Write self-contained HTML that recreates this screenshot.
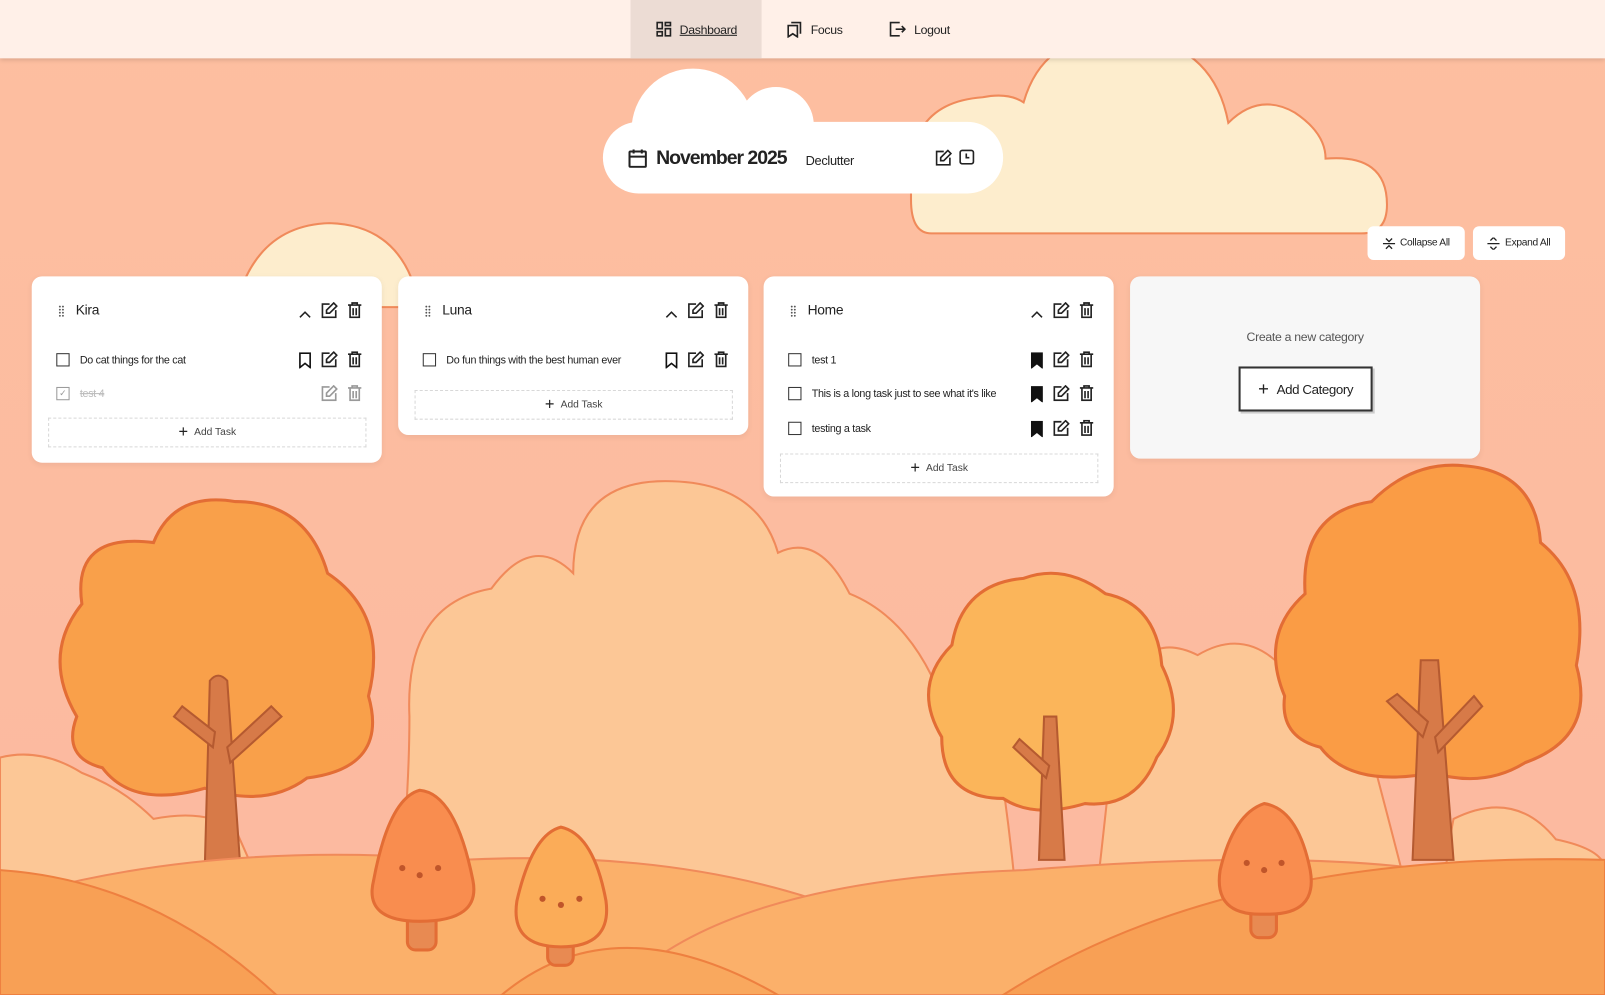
<!DOCTYPE html>
<html><head><meta charset="utf-8"><style>
html,body{margin:0;padding:0;width:1605px;height:995px;overflow:hidden;background:#fdbfa0;}
#root{position:absolute;left:0;top:0;width:1568px;height:972px;transform:scale(1.02360,1.02366);transform-origin:0 0;font-family:"Liberation Sans",sans-serif;color:#222;}
.abs{position:absolute}
.nav{left:0;top:0;width:1568px;height:57px;background:#fff0e8;box-shadow:0 2px 4px rgba(0,0,0,.12);}
.tab{top:0;height:57px;display:flex;align-items:center;gap:8px;font-size:12px;letter-spacing:-.3px}
.card{background:#fff;border-radius:10px;box-shadow:0 2px 6px rgba(0,0,0,.06);}
.t{font-size:10.5px;color:#222;letter-spacing:-.3px}
.ic{position:absolute;}
.add{position:absolute;border:1px dashed #d8d8d8;height:27px;display:flex;align-items:center;justify-content:center;gap:6px;font-size:10px;color:#444;}
.btn{background:#fff;border-radius:6px;height:33px;display:flex;align-items:center;justify-content:center;gap:5px;font-size:10px;letter-spacing:-.3px}
</style></head><body><div id="root">
<svg class="abs" style="left:0;top:0" width="1568" height="972" viewBox="0 0 1568 972">
<defs><linearGradient id="bg" x1="0" y1="0" x2="0" y2="1"><stop offset="0" stop-color="#fdbfa0"/><stop offset="1" stop-color="#fcb9a0"/></linearGradient></defs>
<rect width="1568" height="972" fill="url(#bg)"/>
<path d="M910 228 Q890 228 890 195 L890 170 Q890 100 960 95 Q985 90 1000 100 Q1020 30 1100 35 Q1185 40 1200 120 Q1230 90 1265 110 Q1295 130 1295 155 Q1355 150 1355 200 Q1355 228 1330 228 Z" fill="#fdedcd" stroke="#f08a5a" stroke-width="2"/>
<path d="M230 300 Q250 220 322 218 Q395 220 410 300 Z" fill="#fdedcd" stroke="#f08a5a" stroke-width="2"/>
<circle cx="677" cy="127" r="60" fill="#fff"/><circle cx="758" cy="122" r="37" fill="#fff"/>
<path d="M380 972 Q400 800 400 700 Q395 590 480 575 Q520 520 560 560 Q560 470 650 470 Q740 470 760 540 Q800 520 830 580 Q880 600 910 660 Q930 640 960 650 Q990 800 1000 972 Z" fill="#fcc796" stroke="#f08a5a" stroke-width="2"/>
<path d="M1060 972 Q1080 800 1090 700 Q1110 610 1170 640 Q1220 610 1260 660 Q1300 650 1330 700 Q1370 850 1400 972Z" fill="#fcc796" stroke="#f08a5a" stroke-width="2"/>
<path d="M0 972 L0 740 Q40 730 80 755 Q120 770 150 800 Q200 790 230 810 Q270 900 300 972Z" fill="#fcc796" stroke="#f08a5a" stroke-width="2"/>
<path d="M1400 972 Q1410 850 1420 800 Q1480 770 1520 820 Q1568 830 1568 850 L1568 972Z" fill="#fcc796" stroke="#f08a5a" stroke-width="2"/>
<g stroke="#e36d35" stroke-width="3">
<path d="M75 700 Q40 640 80 590 Q70 520 150 530 Q170 480 230 490 Q300 490 320 560 Q380 600 360 680 Q380 750 300 760 Q260 790 200 770 Q130 790 100 750 Q60 740 75 700Z" fill="#f9a04a"/>
<path d="M920 720 Q890 670 930 630 Q940 570 1000 565 Q1040 550 1080 580 Q1130 590 1135 650 Q1160 700 1130 740 Q1110 790 1060 785 Q1010 800 980 780 Q920 780 920 720Z" fill="#fbb55a"/>
<path d="M1255 680 Q1230 620 1275 580 Q1270 500 1340 490 Q1380 450 1430 455 Q1500 460 1505 530 Q1555 570 1540 650 Q1560 720 1490 745 Q1450 770 1400 755 Q1320 770 1290 730 Q1250 720 1255 680Z" fill="#fa9c45"/>
</g>
<g fill="#d77a48" stroke="#b55a30" stroke-width="2">
<path d="M200 850 L205 665 Q213 655 222 665 L235 850Z"/><path d="M208 730 L170 700 L178 690 L210 715Z"/><path d="M222 730 L265 690 L275 700 L225 745Z"/>
<path d="M1015 840 L1020 700 L1032 700 L1040 840Z"/><path d="M1022 760 L990 730 L996 722 L1025 748Z"/>
<path d="M1380 840 L1388 645 L1405 645 L1420 840Z"/><path d="M1390 720 L1355 685 L1365 678 L1395 705Z"/><path d="M1402 720 L1440 680 L1448 690 L1405 735Z"/>
</g>
<path d="M0 972 L0 880 Q200 820 450 840 Q650 830 800 880 L800 972Z" fill="#fbb06a" stroke="#f08a5a" stroke-width="2"/>
<path d="M600 972 Q700 860 1000 850 Q1250 830 1400 850 Q1500 830 1568 860 L1568 972Z" fill="#fbb06a" stroke="#f08a5a" stroke-width="2"/>
<path d="M0 972 L0 850 Q150 860 270 972Z" fill="#f8a055" stroke="#ee8040" stroke-width="2"/>
<path d="M490 972 Q600 880 760 972Z" fill="#f9a85e" stroke="#ee8040" stroke-width="2"/>
<path d="M980 972 Q1200 830 1568 840 L1568 972Z" fill="#f8a055" stroke="#ee8040" stroke-width="2"/>
<g stroke="#e36d35" stroke-width="3">
<rect x="398" y="890" width="28" height="38" rx="8" fill="#e88a52"/>
<path d="M410 772 Q380 780 365 860 Q355 900 410 900 Q470 900 462 860 Q445 775 410 772Z" fill="#f98d4f"/>
<rect x="535" y="910" width="25" height="33" rx="8" fill="#e88a52"/>
<path d="M548 808 Q520 815 505 880 Q498 925 548 925 Q598 925 592 880 Q580 815 548 808Z" fill="#fbac58"/>
<rect x="1222" y="880" width="25" height="36" rx="8" fill="#e88a52"/>
<path d="M1235 785 Q1205 795 1192 850 Q1185 895 1235 893 Q1288 895 1280 850 Q1268 790 1235 785Z" fill="#f98d4f"/>
</g>
<g fill="#c0552a"><circle cx="393" cy="848" r="3"/><circle cx="410" cy="855" r="3"/><circle cx="428" cy="848" r="3"/><circle cx="530" cy="878" r="3"/><circle cx="548" cy="884" r="3"/><circle cx="566" cy="878" r="3"/><circle cx="1218" cy="843" r="3"/><circle cx="1235" cy="850" r="3"/><circle cx="1252" cy="843" r="3"/></g>
</svg>

<div class="abs nav"></div>
<div class="abs" style="left:616px;top:0;width:128px;height:57px;background:#ecdcd4"></div>
<div class="abs tab" style="left:641px"><svg width="15" height="15" viewBox="0 0 15 15" fill="none" stroke="#222" stroke-width="1.6"><rect x="1" y="1" width="5" height="6"/><rect x="9" y="1" width="5" height="3"/><rect x="1" y="10" width="5" height="4"/><rect x="9" y="7" width="5" height="7"/></svg><span style="text-decoration:underline">Dashboard</span></div>
<div class="abs tab" style="left:769px"><svg width="15" height="16" viewBox="0 0 15 16" fill="none" stroke="#222" stroke-width="1.6"><path d="M4 1h9v11"/><path d="M1 4h9v11l-4.5-3L1 15Z"/></svg><span>Focus</span></div>
<div class="abs tab" style="left:869px"><svg width="16" height="15" viewBox="0 0 16 15" fill="none" stroke="#222" stroke-width="1.6"><path d="M10 1H1v13h9"/><path d="M6 7.5h9M12 4.5l3 3-3 3"/></svg><span>Logout</span></div>

<div class="abs" style="left:589px;top:119px;width:391px;height:70px;background:#fff;border-radius:35px"></div>
<svg class="abs" style="left:614px;top:145px" width="18" height="19" viewBox="0 0 18 19" fill="none" stroke="#222" stroke-width="2"><rect x="1" y="3" width="16" height="15" rx="1"/><path d="M1 8h16M5 1v4M13 1v4"/></svg>
<div class="abs" style="left:641px;top:144px;font-size:19px;font-weight:bold;letter-spacing:-1px">November 2025</div>
<div class="abs" style="left:787px;top:150px;font-size:12.5px;letter-spacing:-.3px">Declutter</div>
<svg class="abs" style="left:914px;top:146px" width="16" height="16" viewBox="0 0 16 16" fill="none" stroke="#222" stroke-width="1.6"><path d="M8 2H1v13h13V8"/><path d="M12 1l3 3-7 7H5V8Z"/></svg>
<svg class="abs" style="left:937px;top:146px" width="15" height="15" viewBox="0 0 15 15" fill="none" stroke="#222" stroke-width="1.6"><rect x="1" y="1" width="13" height="13" rx="2"/><path d="M7 4v4h3"/></svg>

<div class="abs btn" style="left:1336px;top:221px;width:95px"><svg width="12" height="12" viewBox="0 0 12 12" fill="none" stroke="#222" stroke-width="1.3"><path d="M0 6h12M3 1l3 3 3-3M3 11l3-3 3 3"/></svg>Collapse All</div>
<div class="abs btn" style="left:1439px;top:221px;width:90px"><svg width="12" height="12" viewBox="0 0 12 12" fill="none" stroke="#222" stroke-width="1.3"><path d="M0 6h12M3 3l3-3 3 3M3 9l3 3 3-3"/></svg>Expand All</div>

<div class="abs card" style="left:31px;top:270px;width:342px;height:182px"></div>
<div class="abs card" style="left:389px;top:270px;width:342px;height:155px"></div>
<div class="abs card" style="left:746px;top:270px;width:342px;height:215px"></div>
<div class="abs card" style="left:1104px;top:270px;width:342px;height:178px;background:#f7f7f7"></div>

<div id="content"></div>
<div class="abs" style="left:1104px;top:322px;width:342px;text-align:center;font-size:12px;color:#555;letter-spacing:-.3px">Create a new category</div>
<div class="abs" style="left:1210px;top:358px;width:127px;height:40px;border:2px solid #333;background:#fff;box-shadow:2px 2px 0 #ccc;display:flex;align-items:center;justify-content:center;gap:8px;font-size:13px;letter-spacing:-.4px"><span style="font-size:18px">+</span>Add Category</div>

<script>
const edit='<svg width="16" height="16" viewBox="0 0 16 16" fill="none" stroke="C" stroke-width="1.6"><path d="M8 2H1v13h13V8"/><path d="M12 1l3 3-7 7H5V8Z"/></svg>';
const trash='<svg width="15" height="16" viewBox="0 0 15 16" fill="none" stroke="C" stroke-width="1.6"><path d="M1 3h13M5 3V1h5v2M3 3v12h9V3M6 6v7M9 6v7"/></svg>';
const bm='<svg width="12" height="16" viewBox="0 0 12 16" fill="F" stroke="#111" stroke-width="1.6"><path d="M1 1h10v14l-5-4-5 4Z"/></svg>';
const chev='<svg width="12" height="8" viewBox="0 0 12 8" fill="none" stroke="#222" stroke-width="1.5"><path d="M1 7l5-5 5 5"/></svg>';
const grip='<svg width="6" height="12" viewBox="0 0 6 12" fill="#555"><circle cx="1.5" cy="1.5" r=".9"/><circle cx="4.5" cy="1.5" r=".9"/><circle cx="1.5" cy="4.5" r=".9"/><circle cx="4.5" cy="4.5" r=".9"/><circle cx="1.5" cy="7.5" r=".9"/><circle cx="4.5" cy="7.5" r=".9"/><circle cx="1.5" cy="10.5" r=".9"/><circle cx="4.5" cy="10.5" r=".9"/></svg>';
let h='';
function a(x,y,s){h+=`<div class="ic" style="left:${x}px;top:${y}px">${s}</div>`;}
const cards=[
 {x:31,title:'Kira',tasks:[['Do cat things for the cat',0,0],['test 4',2,0]],add:408},
 {x:389,title:'Luna',tasks:[['Do fun things with the best human ever',0,0]],add:381},
 {x:746,title:'Home',tasks:[['test 1',0,1],["This is a long task just to see what it's like",0,1],['testing a task',0,1]],add:443}];
const ty=[352,385,419];
for(const c of cards){
 a(c.x+26,297,grip);
 h+=`<div class="abs" style="left:${c.x+43}px;top:295px;font-size:13.5px;letter-spacing:-.3px">${c.title}</div>`;
 a(c.x+261,298,chev);a(c.x+283,295,edit.replace('C','#222'));a(c.x+308,295,trash.replace('C','#222'));
 c.tasks.forEach((t,i)=>{const y=ty[i];const done=t[1]==2;
  h+=`<div class="abs" style="left:${c.x+24}px;top:${y-7}px;width:11px;height:11px;border:1.5px solid ${done?'#999':'#333'};font-size:9px;line-height:11px;text-align:center;color:#999">${done?'✓':''}</div>`;
  h+=`<div class="abs t" style="left:${c.x+47}px;top:${y-6}px;${done?'color:#bbb;text-decoration:line-through':''}">${t[0]}</div>`;
  if(!done)a(c.x+261,y-8,bm.replace('F',t[2]?'#111':'none'));
  const col=done?'#999':'#222';a(c.x+283,y-9,edit.replace('C',col));a(c.x+308,y-9,trash.replace('C',col));
 });
 h+=`<div class="add" style="left:${c.x+16}px;top:${c.add}px;width:309px"><span style="font-size:16px;color:#222">+</span>Add Task</div>`;
}
document.getElementById('content').innerHTML=h;
</script>
</div></body></html>
